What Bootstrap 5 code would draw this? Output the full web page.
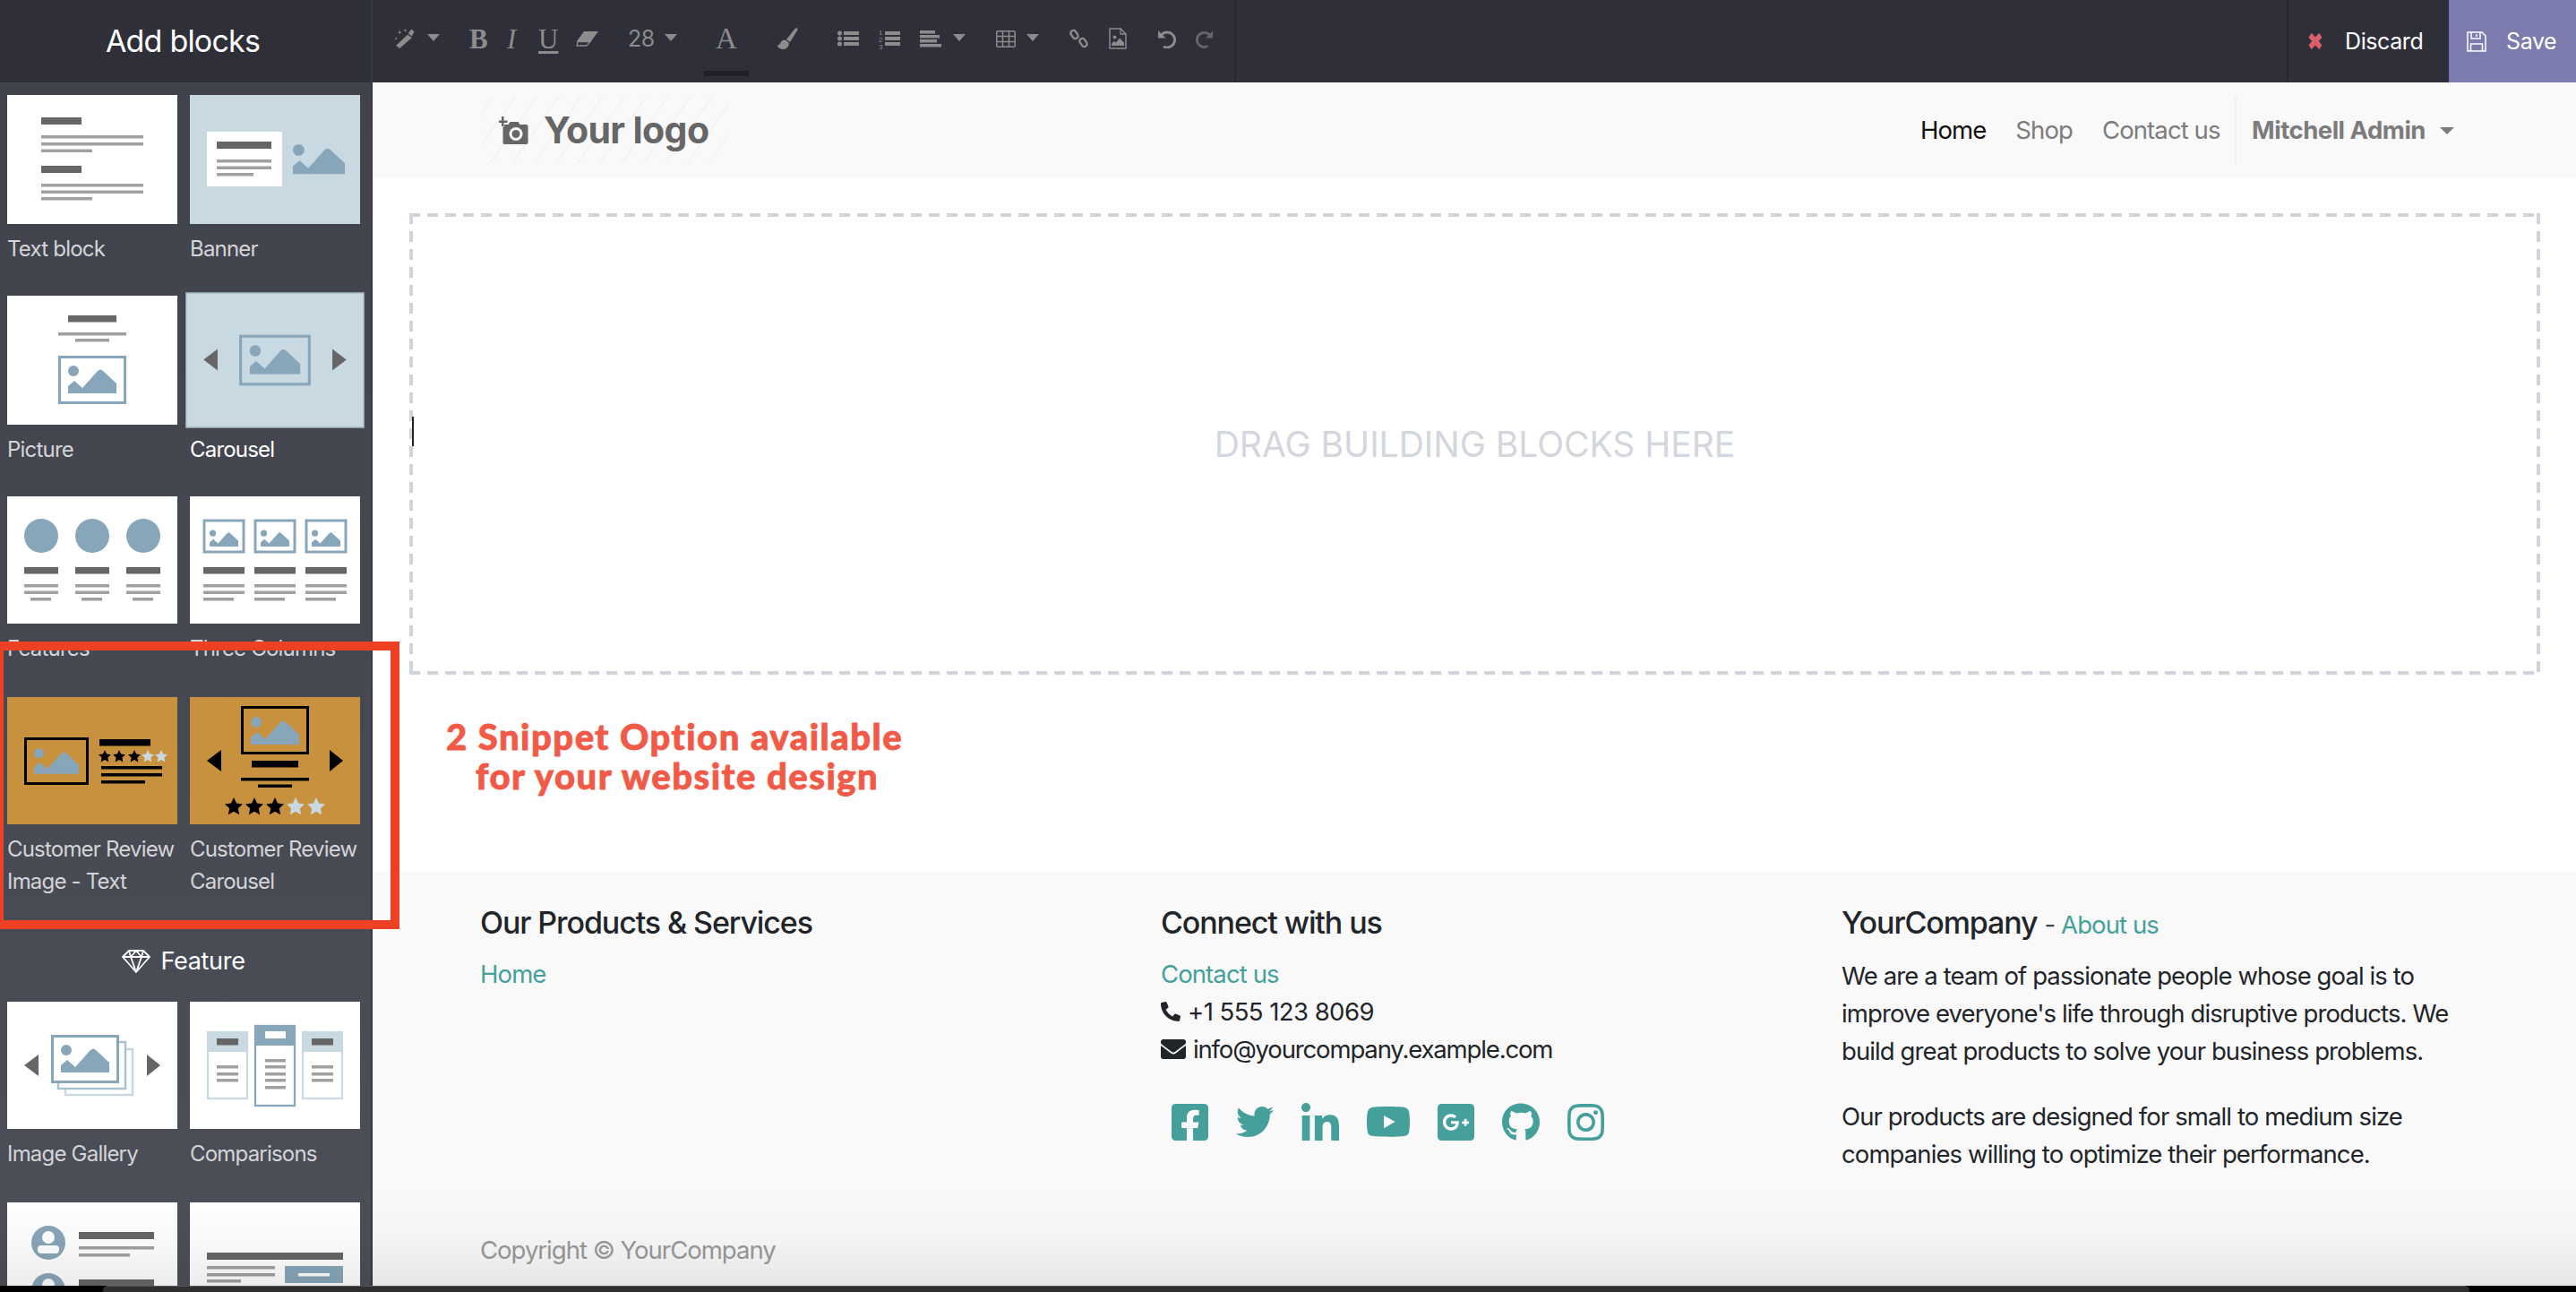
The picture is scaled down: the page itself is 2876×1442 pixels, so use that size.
<!DOCTYPE html>
<html lang="en">
<head>
<meta charset="utf-8">
<title>Add blocks</title>
<link href="https://cdn.jsdelivr.net/npm/bootstrap@5.3.0/dist/css/bootstrap.min.css" rel="stylesheet">
<style>
html,body{margin:0;height:100%;overflow:hidden}
body{font-family:Inter,"Liberation Sans",sans-serif;font-size:27.5px;line-height:42px;letter-spacing:-.9px;color:#212529;background:#fff}
.shell{height:1442px;width:2876px;overflow:hidden}
.rail{width:416px;flex:none;background:linear-gradient(180deg,#3f424b 0,#4c4f58 100%);border-right:2px solid #383a43;overflow:hidden}
.rail-head{height:92px;background:#2e2f38;color:#fff;font-size:34px;letter-spacing:-.8px;margin-right:-2px;border-right:2px solid #25262d;padding-right:6px}
.blocks{display:grid;grid-template-columns:190px 190px;column-gap:14px;padding:14px 0 0 8px}
.snip{height:224px;color:#d4d5d8;font-size:24px;line-height:35.5px;letter-spacing:-.8px}
.snip-tall{height:270px}
.snip-hot{color:#fff}
.thumb{display:block;width:190px;height:142px;margin-bottom:10px;background:#fff}
.thumb-lg{height:144px}
.thumb-blue{background:#c9d9e2}
.thumb-gold{background:#c8913e}
.thumb-hot{transform:scale(1.05);outline:1px solid #8e9fab;outline-offset:-1px}
.blocks-title{height:50px;grid-column:1 / 3;color:#fff;font-size:27px;letter-spacing:-.3px;margin-bottom:20px;gap:11px}
.stage{flex:1 1 auto;min-width:0}
.tools{height:92px;background:#2e2f38;color:#8c8c8c;flex:none}
.tool-set{width:964px;height:92px;border-right:2px solid #25262d;padding-left:25px;flex:none}
.tool-set > *{flex:none}
.ttxt{font-family:"Liberation Serif",serif;font-size:31px;line-height:1;letter-spacing:0;margin-top:-6px}
.t-bold{font-weight:700;width:20px;margin-left:33px}
.t-it{font-style:italic;width:12px;margin-left:22px}
.t-un{text-decoration:underline;text-underline-offset:3px;width:20px;margin-left:23px}
.t-num{font-size:25px;margin-left:33px;width:29px;letter-spacing:-.5px;margin-top:-6px}
.t-a{width:50px;margin-left:30px;height:60px;border-bottom:6px solid #1f2027;text-align:center;font-size:33px;line-height:36px;margin-top:18px}
.caret-t{width:14px;height:8px;background:#8c8c8c;clip-path:polygon(0 0,100% 0,50% 100%);margin-top:-8px}
.up{margin-top:-6px}
.m14{margin-left:14px}.m12{margin-left:12px}.m13{margin-left:13px}.m22{margin-left:22px}.m31{margin-left:31px}.m44{margin-left:44px}.m33{margin-left:33px}.m34{margin-left:34px}
.act{color:#fff;font-size:25px;letter-spacing:-.4px;height:92px}
.act-discard{width:181px;border-left:2px solid #25262d;padding-left:20px;gap:23px}
.act-save{width:142px;background:#7c7bad;padding-left:20px;gap:22px}
.topnav{height:106px;flex:none;background:#f9f9f9;padding:0 136px 0 121px}
.logo-zone{width:278px;height:74px;padding-left:20px;gap:16px;color:#666;font-weight:700;font-size:41px;letter-spacing:-.6px;background:repeating-linear-gradient(-55deg,#f9f9f9 0 18px,#f3f3f3 18px 20px)}
.topnav .nav-link{color:#7c7c7c;padding:0 16.5px;font-size:27.5px;line-height:42px}
.topnav .nav-link.now{color:#111}
.userbox{border-left:2px solid #eeeeee;height:74px;padding-left:17px}
.topnav .nav-link.who{padding:0;font-weight:700;color:#7c7c7c;letter-spacing:-.5px}
.topnav .nav-link.who::after{margin-left:16px;vertical-align:.2em}
.wrap-main{height:775px;padding:40px 40px 0 41px;flex:none;background:#fff}
.dropzone{height:515px;font-size:39px;letter-spacing:0;color:#d3d6dd;background-image:repeating-linear-gradient(90deg,#d0d4db 0 12px,transparent 12px 20px),repeating-linear-gradient(90deg,#d0d4db 0 12px,transparent 12px 20px),repeating-linear-gradient(180deg,#d0d4db 0 12px,transparent 12px 20px),repeating-linear-gradient(180deg,#d0d4db 0 12px,transparent 12px 20px);background-size:100% 4px,100% 4px,4px 100%,4px 100%;background-position:0 0,0 100%,0 0,100% 0;background-repeat:no-repeat}
.caret-mark{position:absolute;left:3px;top:227px;width:2px;height:33px;background:#222}
.note{font-family:Lato,"Liberation Sans",sans-serif;font-weight:900;color:#f15a47;font-size:40px;letter-spacing:1.5px;line-height:44px;padding:47px 0 0 41px;-webkit-text-stroke:.8px #f15a47}
.note-2{padding-left:33px}
.site-foot{flex:1 1 auto;background:#f9f9f9;padding:36px 0 0 120px}
.foot-grid{width:2280px}
.foot-h{font-size:34px;font-weight:500;line-height:42px;margin:0 0 15px;letter-spacing:-1.1px}
.tl{color:#45a09c;text-decoration:none}
.foot-sub{font-size:27.5px;font-weight:400;letter-spacing:-.9px;color:#444}
.foot-txt{width:700px;margin:0 0 31px}
.ico-r{color:#45a09c;margin-top:39px;padding-left:12px;gap:31px}
.tel{letter-spacing:-.55px}
.mail{letter-spacing:-1.15px}
.copy{color:#999;letter-spacing:-1px}
.foot-bottom{margin-top:34px}
.red-frame{position:absolute;left:-6px;top:716px;width:452px;height:321px;border:10px solid #ee4023;pointer-events:none}
.sheen{position:absolute;left:0;right:0;bottom:7px;height:110px;background:linear-gradient(180deg,rgba(0,0,0,0),rgba(0,0,0,.018) 50%,rgba(0,0,0,.075));pointer-events:none}
.edge-base{position:absolute;left:0;right:0;bottom:0;height:7px;background:#000}
.edge-bar{position:absolute;left:115px;width:2642px;bottom:0;height:7px;background:#2e2e2e;border-top:1px solid #555;border-radius:6px 6px 0 0}
</style>
</head>
<body>
<svg width="0" height="0" class="d-block">
  <defs>
    <symbol id="mt" viewBox="0 0 54 32"><circle cx="6" cy="7" r="6" fill="#88a6b9"/><path d="M0 32V24L7 18 16 26 33 7Q36 4 39 7L54 21V32Z" fill="#88a6b9"/></symbol>
    <symbol id="st" viewBox="0 0 24 24"><path d="M12 0l3.6 7.9 8.4 1-6.2 5.8 1.6 8.5L12 19l-7.4 4.2 1.6-8.5L0 8.900l8.400-1z"/></symbol>
  </defs>
</svg>
<div class="shell position-relative d-flex">
  <aside class="rail">
    <div class="rail-head d-flex align-items-center justify-content-center">Add blocks</div>
    <div class="blocks">
      <div class="snip">
        <svg class="thumb thumb-lg" viewBox="0 0 190 144"><g fill="#666"><rect x="38" y="25" width="45" height="8"/><rect x="38" y="79" width="45" height="8"/></g><g fill="#a0a0a0"><rect x="38" y="45" width="114" height="3.500"/><rect x="38" y="53" width="114" height="3.500"/><rect x="38" y="60.500" width="57" height="3.500"/><rect x="38" y="99" width="114" height="3.500"/><rect x="38" y="106.500" width="114" height="3.500"/><rect x="38" y="114" width="57" height="3.500"/></g></svg>
        Text block
      </div>
      <div class="snip">
        <svg class="thumb thumb-lg thumb-blue" viewBox="0 0 190 144"><rect x="19" y="41" width="84" height="61" fill="#fff"/><rect x="30" y="52" width="61" height="8" fill="#666"/><g fill="#a0a0a0"><rect x="30" y="72" width="61" height="3.500"/><rect x="30" y="79.500" width="61" height="3.500"/><rect x="30" y="87" width="41" height="3.500"/></g><use href="#mt" x="115" y="53" width="58" height="36"/></svg>
        Banner
      </div>
      <div class="snip">
        <svg class="thumb thumb-lg" viewBox="0 0 190 144"><rect x="68" y="22" width="54" height="7.500" fill="#666"/><rect x="57" y="41" width="76" height="3.500" fill="#a0a0a0"/><rect x="76" y="48" width="38" height="3.500" fill="#a0a0a0"/><rect x="58.500" y="68.500" width="73" height="51" fill="none" stroke="#88a6b9" stroke-width="3"/><use href="#mt" x="68" y="77" width="54" height="32"/></svg>
        Picture
      </div>
      <div class="snip snip-hot">
        <svg class="thumb thumb-lg thumb-blue thumb-hot" viewBox="0 0 190 144"><path d="M34 60V83L19 71.500Z" fill="#666"/><path d="M156 60V83L171 71.500Z" fill="#666"/><rect x="58.500" y="46.500" width="73" height="51" fill="none" stroke="#88a6b9" stroke-width="3"/><use href="#mt" x="68" y="55" width="54" height="32"/></svg>
        Carousel
      </div>
      <div class="snip">
        <svg class="thumb" viewBox="0 0 190 142"><g fill="#88a6b9"><circle cx="38" cy="44" r="19"/><circle cx="95" cy="44" r="19"/><circle cx="152" cy="44" r="19"/></g><g fill="#666"><rect x="19" y="79" width="38" height="7.500"/><rect x="76" y="79" width="38" height="7.500"/><rect x="133" y="79" width="38" height="7.500"/></g><g fill="#a0a0a0"><rect x="19" y="98" width="38" height="3.500"/><rect x="19" y="105.500" width="38" height="3.500"/><rect x="26" y="113" width="23" height="3.500"/><rect x="76" y="98" width="38" height="3.500"/><rect x="76" y="105.500" width="38" height="3.500"/><rect x="83" y="113" width="23" height="3.500"/><rect x="133" y="98" width="38" height="3.500"/><rect x="133" y="105.500" width="38" height="3.500"/><rect x="140" y="113" width="23" height="3.500"/></g></svg>
        Features
      </div>
      <div class="snip">
        <svg class="thumb" viewBox="0 0 190 142"><g fill="none" stroke="#88a6b9" stroke-width="3"><rect x="16" y="27" width="44" height="35"/><rect x="73" y="27" width="44" height="35"/><rect x="130" y="27" width="44" height="35"/></g><use href="#mt" x="22" y="37" width="32" height="19"/><use href="#mt" x="79" y="37" width="32" height="19"/><use href="#mt" x="136" y="37" width="32" height="19"/><g fill="#666"><rect x="15" y="79" width="46" height="7.500"/><rect x="72" y="79" width="46" height="7.500"/><rect x="129" y="79" width="46" height="7.500"/></g><g fill="#a0a0a0"><rect x="15" y="98" width="46" height="3.500"/><rect x="15" y="105.500" width="46" height="3.500"/><rect x="15" y="113" width="34" height="3.500"/><rect x="72" y="98" width="46" height="3.500"/><rect x="72" y="105.500" width="46" height="3.500"/><rect x="72" y="113" width="34" height="3.500"/><rect x="129" y="98" width="46" height="3.500"/><rect x="129" y="105.500" width="46" height="3.500"/><rect x="129" y="113" width="34" height="3.500"/></g></svg>
        Three Columns
      </div>
      <div class="snip snip-tall">
        <svg class="thumb thumb-gold" viewBox="0 0 190 142"><rect x="20.500" y="46.500" width="69" height="50" fill="none" stroke="#000" stroke-width="3"/><use href="#mt" x="30" y="56" width="50" height="30"/><rect x="103" y="47" width="57" height="7.500"/><use href="#st" x="102" y="59" width="14" height="14"/><use href="#st" x="118" y="59" width="14" height="14"/><use href="#st" x="135" y="59" width="14" height="14"/><use href="#st" x="150" y="59" width="14" height="14" fill="#c9d9e2"/><use href="#st" x="165" y="59" width="14" height="14" fill="#c9d9e2"/><rect x="105" y="77" width="68" height="3.500"/><rect x="105" y="85" width="68" height="3.500"/><rect x="105" y="93" width="49" height="3.500"/></svg>
        Customer Review<br>Image - Text
      </div>
      <div class="snip snip-tall">
        <svg class="thumb thumb-gold" viewBox="0 0 190 142"><rect x="58.500" y="11.500" width="73" height="51" fill="none" stroke="#000" stroke-width="3"/><use href="#mt" x="68" y="21" width="54" height="32"/><path d="M35 59V83L19 71Z"/><path d="M156 59V83L171 71Z"/><rect x="69" y="71" width="52" height="7.500"/><rect x="57" y="90" width="76" height="3.500"/><rect x="76" y="97.500" width="38" height="3.500"/><use href="#st" x="39" y="112" width="20" height="20"/><use href="#st" x="62" y="112" width="20" height="20"/><use href="#st" x="85" y="112" width="20" height="20"/><use href="#st" x="108" y="112" width="20" height="20" fill="#c9d9e2"/><use href="#st" x="131" y="112" width="20" height="20" fill="#c9d9e2"/></svg>
        Customer Review<br>Carousel
      </div>
      <div class="blocks-title d-flex align-items-center justify-content-center">
        <svg width="32" height="26" viewBox="0 0 32 26" fill="none" stroke="#fff" stroke-width="1.800" stroke-linejoin="round"><path d="M8 1H24L31 8 16 25 1 8ZM1 8H31M10 8 16 25 22 8M8 1 10 8 16 1 22 8 24 1"/></svg>
        Feature
      </div>
      <div class="snip">
        <svg class="thumb" viewBox="0 0 190 142"><path d="M35 59V83L19 71Z" fill="#666"/><path d="M156 59V83L171 71Z" fill="#666"/><rect x="65" y="53" width="75" height="51" fill="#fff" stroke="#c9d9e2" stroke-width="2.500"/><rect x="57" y="45" width="75" height="52" fill="#fff" stroke="#a9c2d0" stroke-width="2.500"/><rect x="50.500" y="38.500" width="73" height="51" fill="#fff" stroke="#88a6b9" stroke-width="3"/><use href="#mt" x="60" y="47" width="54" height="32"/></svg>
        Image Gallery
      </div>
      <div class="snip">
        <svg class="thumb" viewBox="0 0 190 142"><rect x="20" y="34" width="44" height="74" fill="#fff" stroke="#c9d9e2" stroke-width="2.300"/><rect x="19" y="33" width="46" height="23" fill="#c9d9e2"/><rect x="126" y="34" width="44" height="74" fill="#fff" stroke="#c9d9e2" stroke-width="2.300"/><rect x="125" y="33" width="46" height="23" fill="#c9d9e2"/><rect x="73" y="27" width="44" height="89" fill="#fff" stroke="#88a6b9" stroke-width="2.300"/><rect x="72" y="26" width="46" height="23" fill="#88a6b9"/><rect x="84" y="33" width="23" height="8" fill="#fff"/><g fill="#666"><rect x="30" y="41" width="24" height="7.500"/><rect x="136" y="41" width="24" height="7.500"/></g><g fill="#a0a0a0"><rect x="30" y="71" width="24" height="3.500"/><rect x="30" y="79" width="24" height="3.500"/><rect x="30" y="86" width="24" height="3.500"/><rect x="136" y="71" width="24" height="3.500"/><rect x="136" y="79" width="24" height="3.500"/><rect x="136" y="86" width="24" height="3.500"/><rect x="84" y="64" width="23" height="3.500"/><rect x="84" y="71" width="23" height="3.500"/><rect x="84" y="79" width="23" height="3.500"/><rect x="84" y="86" width="23" height="3.500"/><rect x="84" y="94" width="23" height="3.500"/></g></svg>
        Comparisons
      </div>
      <div class="snip">
        <svg class="thumb" viewBox="0 0 190 142"><circle cx="46" cy="45" r="19" fill="#88a6b9"/><circle cx="46" cy="39" r="7" fill="#fff"/><rect x="34" y="48" width="24" height="9" rx="4" fill="#fff"/><circle cx="46" cy="98" r="19" fill="#88a6b9"/><circle cx="46" cy="92" r="7" fill="#fff"/><rect x="80" y="33" width="84" height="8" fill="#666"/><rect x="80" y="86" width="84" height="8" fill="#666"/><g fill="#a0a0a0"><rect x="80" y="49" width="84" height="3.500"/><rect x="80" y="57" width="57" height="3.500"/></g></svg>
      </div>
      <div class="snip">
        <svg class="thumb" viewBox="0 0 190 142"><rect x="19" y="56" width="152" height="8" fill="#666"/><g fill="#a0a0a0"><rect x="19" y="71" width="76" height="3.500"/><rect x="19" y="79" width="76" height="3.500"/><rect x="19" y="86" width="38" height="3.500"/></g><rect x="106" y="71" width="65" height="19" fill="#88a6b9"/><rect x="121" y="79" width="35" height="3.500" fill="#fff"/></svg>
      </div>
    </div>
  </aside>

  <main class="stage d-flex flex-column">
    <div class="tools d-flex">
      <div class="tool-set d-flex align-items-center">
        <svg class="up" width="22" height="22" viewBox="0 0 21 21" fill="currentColor"><path d="M13.500 6.500l4.500 3L5 21 1 18z"/><path d="M17.500 0.500l3 2.500-2.500 5-4-3z"/><path d="M5 2l.6 1.400L7 4l-1.400.6L5 6l-.6-1.400L3 4l1.400-.6zM11 0l.5 1.500L13 2l-1.500.5L11 4l-.5-1.500L9 2l1.500-.5zM1 9l.5 1 1 .5-1 .5-.5 1-.5-1-1-.5 1-.5z"/></svg>
        <span class="caret-t m14"></span>
        <span class="ttxt t-bold">B</span>
        <span class="ttxt t-it">I</span>
        <span class="ttxt t-un">U</span>
        <svg class="m22 up" width="25" height="17" viewBox="0 0 25 17" fill="currentColor"><path d="M9 0h16l-8 11H1z"/><path d="M2 11.500h14L12 16H1L2 11.500z" fill="none" stroke="currentColor" stroke-width="1.300"/></svg>
        <span class="t-num">28</span>
        <span class="caret-t m12"></span>
        <span class="ttxt t-a">A</span>
        <svg class="m31 up" width="24" height="24" viewBox="0 0 24 24" fill="currentColor"><path d="M21 0.500c1.500-.5 3 .5 2.500 2L15 16l-4-3z"/><path d="M10 13.500l4 3.500c-.3 4-3 7-6.500 7C3.500 24 1 21.500 1 19.500c1.500.2 2.500-.8 3.500-3 1-2 3-3 5.500-3z"/></svg>
        <svg class="m44 up" width="24" height="18" viewBox="0 0 24 18" fill="currentColor"><circle cx="2.500" cy="3" r="2.500"/><circle cx="2.500" cy="9" r="2.500"/><circle cx="2.500" cy="15" r="2.500"/><rect x="7" y="1" width="17" height="4"/><rect x="7" y="7" width="17" height="4"/><rect x="7" y="13" width="17" height="4"/></svg>
        <svg class="m22 up" width="24" height="24" viewBox="0 0 24 24" fill="currentColor"><text x="0" y="7.500" font-size="8" font-family="Liberation Sans,sans-serif" letter-spacing="0">1</text><text x="0" y="15.500" font-size="8" font-family="Liberation Sans,sans-serif" letter-spacing="0">2</text><text x="0" y="23.500" font-size="8" font-family="Liberation Sans,sans-serif" letter-spacing="0">3</text><rect x="7" y="4" width="17" height="4"/><rect x="7" y="10" width="17" height="4"/><rect x="7" y="16" width="17" height="4"/></svg>
        <svg class="m22 up" width="24" height="19" viewBox="0 0 24 19" fill="currentColor"><rect x="0" y="0" width="17" height="3.500"/><rect x="0" y="5" width="22" height="3.500"/><rect x="0" y="10" width="19" height="3.500"/><rect x="0" y="15" width="24" height="3.500"/></svg>
        <span class="caret-t m13"></span>
        <svg class="m34 up" width="22" height="19" viewBox="0 0 22 19" fill="none" stroke="currentColor" stroke-width="1.500"><rect x=".8" y=".8" width="20.400" height="17.400" rx="1"/><path d="M1 6.500h20M1 12.500h20M7.500 1v17M14.500 1v17"/></svg>
        <span class="caret-t m12"></span>
        <svg class="m33 up" width="23" height="22" viewBox="0 0 23 22" fill="none" stroke="currentColor" stroke-width="2.400"><rect x="-5" y="-3" width="10" height="6" rx="3" transform="translate(6.500 6.500) rotate(55)" /><rect x="-5" y="-3" width="10" height="6" rx="3" transform="translate(16.500 15.500) rotate(55)"/></svg>
        <svg class="m22 up" width="20" height="24" viewBox="0 0 20 24" fill="currentColor"><path d="M1 1h12l6 6v16H1z" fill="none" stroke="currentColor" stroke-width="1.500"/><path d="M13 1v6h6" fill="none" stroke="currentColor" stroke-width="1.300"/><circle cx="6.500" cy="10.500" r="2"/><path d="M3 20v-2.500l3-2.500 2 1.500 4-5 5 5v3.500z"/></svg>
        <svg class="m34 up" width="21" height="21" viewBox="0 0 21 21" fill="none" stroke="currentColor" stroke-width="3"><path d="M5 5.500A8.500 8.500 0 1 1 7 19"/><path d="M1 1v8.500h8.500z" fill="currentColor" stroke="none"/></svg>
        <svg class="m22 up" width="20" height="21" viewBox="0 0 21 21" fill="none" stroke="#666" stroke-width="3"><path d="M16 5.500A8.500 8.500 0 1 0 14 19"/><path d="M20 1v8.500h-8.500z" fill="#666" stroke="none"/></svg>
      </div>
      <div class="flex-grow-1"></div>
      <a class="act act-discard d-flex align-items-center text-decoration-none">
        <svg width="20" height="20" viewBox="0 0 19 19"><path d="M3 5.500L5.500 1.500 9.500 6 13.500 1.500 16 5.500 12.500 9.500 16 13.500 13.500 17.500 9.500 13 5.500 17.500 3 13.500 6.500 9.500z" fill="#d9606b" stroke="#d9606b"/></svg>
        Discard
      </a>
      <a class="act act-save d-flex align-items-center text-decoration-none">
        <svg width="22" height="23" viewBox="0 0 22 23" fill="none" stroke="#fff" stroke-width="1.500"><path d="M1 1h16l4 4v17H1z"/><path d="M5 1v7h10V1M11 3v3M4.500 22v-8h13v8" /></svg>
        Save
      </a>
    </div>

    <nav class="navbar topnav flex-nowrap align-items-center">
      <a class="logo-zone d-flex align-items-center text-decoration-none">
        <svg width="34" height="31" viewBox="0 0 34 31" fill="#666"><path d="M4.500 9h6l2-3h9l2 3h7a2 2 0 0 1 2 2v18a2 2 0 0 1-2 2h-24a2 2 0 0 1-2-2z"/><circle cx="19" cy="19.500" r="7.500" fill="#f9f9f9"/><circle cx="19" cy="19.500" r="4.500"/><rect x="3" y="0" width="2.500" height="11" fill="#f9f9f9" stroke="#f9f9f9"/><rect x="3" y="0" width="2.500" height="11"/><rect x="-1" y="4.500" width="10.500" height="2.500"/></svg>
        Your logo
      </a>
      <ul class="navbar-nav flex-row align-items-center">
        <li class="nav-item"><a class="nav-link now">Home</a></li>
        <li class="nav-item"><a class="nav-link">Shop</a></li>
        <li class="nav-item"><a class="nav-link">Contact us</a></li>
        <li class="nav-item userbox d-flex align-items-center"><a class="nav-link who dropdown-toggle">Mitchell Admin</a></li>
      </ul>
    </nav>

    <section class="wrap-main">
      <div class="dropzone position-relative d-flex align-items-center justify-content-center">
        <span class="caret-mark"></span>
        DRAG BUILDING BLOCKS HERE
      </div>
      <div class="note">
        <div>2 Snippet Option available</div>
        <div class="note-2">for your website design</div>
      </div>
    </section>

    <footer class="site-foot">
      <div class="row g-0 foot-grid">
        <div class="col-4">
          <h5 class="foot-h">Our Products &amp; Services</h5>
          <a class="tl">Home</a>
        </div>
        <div class="col-4">
          <h5 class="foot-h">Connect with us</h5>
          <div><a class="tl">Contact us</a></div>
          <div class="tel d-flex align-items-center gap-2">
            <svg width="22" height="22" viewBox="0 0 512 512" fill="#212529"><path transform="matrix(-1 0 0 1 512 0)" d="M493.400 24.600l-104-24c-11.300-2.600-22.900 3.300-27.500 13.900l-48 112c-4.200 9.800-1.400 21.300 6.900 28l60.600 49.600c-36 76.700-98.900 140.500-177.200 177.200l-49.600-60.600c-6.800-8.300-18.200-11.100-28-6.900l-112 48C3.900 366.500-2 378.100.6 389.400l24 104C27.100 504.200 36.700 512 48 512c256.100 0 464-207.500 464-464 0-11.200-7.700-20.900-18.600-23.400z"/></svg>
            +1 555 123 8069
          </div>
          <div class="mail d-flex align-items-center gap-2">
            <svg width="28" height="22" viewBox="0 64 512 384" preserveAspectRatio="none" fill="#212529"><path d="M502.300 190.800c3.900-3.100 9.700-.2 9.700 4.700V400c0 26.500-21.500 48-48 48H48c-26.500 0-48-21.500-48-48V195.600c0-5 5.700-7.800 9.700-4.700 22.400 17.400 52.100 39.500 154.100 113.600 21.100 15.400 56.700 47.800 92.200 47.600 35.700.3 72-32.800 92.300-47.600 102-74.100 131.600-96.300 154-113.700zM256 320c23.200.4 56.600-29.200 73.400-41.400 132.700-96.300 142.800-104.700 173.400-128.700 5.800-4.500 9.200-11.500 9.200-18.900v-19c0-26.500-21.500-48-48-48H48C21.500 64 0 85.500 0 112v19c0 7.400 3.400 14.300 9.200 18.900 30.600 23.900 40.700 32.400 173.400 128.700 16.800 12.200 50.200 41.800 73.400 41.400z"/></svg>
            info@yourcompany.example.com
          </div>
          <div class="ico-r d-flex align-items-center">
            <svg width="41" height="41" viewBox="0 32 448 448" fill="currentColor"><path d="M400 32H48A48 48 0 0 0 0 80v352a48 48 0 0 0 48 48h137.250V327.690h-63V256h63v-54.640c0-62.150 37-96.480 93.670-96.480 27.140 0 55.520 4.840 55.520 4.840v61h-31.270c-30.810 0-40.420 19.120-40.420 38.730V256h68.780l-11 71.690h-57.780V480H400a48 48 0 0 0 48-48V80a48 48 0 0 0-48-48z"/></svg>
            <svg width="42" height="42" viewBox="0 0 512 512" fill="currentColor"><path d="M459.370 151.716c.325 4.548.325 9.097.325 13.645 0 138.720-105.583 298.558-298.558 298.558-59.452 0-114.680-17.219-161.137-47.106 8.447.974 16.568 1.299 25.340 1.299 49.055 0 94.213-16.568 130.274-44.832-46.132-.975-84.792-31.188-98.112-72.772 6.498.974 12.995 1.624 19.818 1.624 9.421 0 18.843-1.300 27.614-3.573-48.081-9.747-84.143-51.980-84.143-102.985v-1.299c13.969 7.797 30.214 12.670 47.431 13.319-28.264-18.843-46.781-51.005-46.781-87.391 0-19.492 5.197-37.360 14.294-52.954 51.655 63.675 129.300 105.258 216.365 109.807-1.624-7.797-2.599-15.918-2.599-24.040 0-57.828 46.782-104.934 104.934-104.934 30.213 0 57.502 12.670 76.670 33.137 23.715-4.548 46.456-13.320 66.599-25.340-7.798 24.366-24.366 44.833-46.132 57.827 21.117-2.273 41.584-8.122 60.426-16.243-14.292 20.791-32.161 39.308-52.628 54.253z"/></svg>
            <svg width="42" height="42" viewBox="0 0 448 448" fill="currentColor"><path d="M100.280 448H7.400V148.900h92.880zM53.790 108.100C24.090 108.100 0 83.500 0 53.800a53.790 53.790 0 0 1 107.580 0c0 29.700-24.100 54.300-53.790 54.300zM447.900 448h-92.680V302.400c0-34.700-.7-79.200-48.290-79.200-48.290 0-55.690 37.700-55.690 76.700V448h-92.780V148.900h89.080v40.800h1.300c12.400-23.500 42.690-48.300 87.880-48.300 94 0 111.280 61.900 111.280 142.300V448z"/></svg>
            <svg width="48" height="42" viewBox="15 40 546 432" fill="currentColor"><path d="M549.655 124.083c-6.281-23.650-24.787-42.276-48.284-48.597C458.781 64 288 64 288 64S117.220 64 74.629 75.486c-23.497 6.322-42.003 24.947-48.284 48.597-11.412 42.867-11.412 132.305-11.412 132.305s0 89.438 11.412 132.305c6.281 23.650 24.787 41.500 48.284 47.821C117.220 448 288 448 288 448s170.780 0 213.371-11.486c23.497-6.321 42.003-24.171 48.284-47.821 11.412-42.867 11.412-132.305 11.412-132.305s0-89.438-11.412-132.305zm-317.510 213.508V175.185l142.739 81.205-142.739 81.201z"/></svg>
            <svg width="41" height="41" viewBox="0 32 448 448" fill="currentColor"><path d="M400 32H48C21.500 32 0 53.500 0 80v352c0 26.500 21.500 48 48 48h352c26.500 0 48-21.500 48-48V80c0-26.500-21.500-48-48-48zM164 356c-55.300 0-100-44.700-100-100s44.700-100 100-100c27 0 49.500 9.800 67 26.200l-27.100 26.100c-7.400-7.100-20.300-15.400-39.800-15.400-34.100 0-61.900 28.200-61.900 63.200 0 34.900 27.800 63.200 61.900 63.200 39.600 0 54.400-28.500 56.800-43.100H164v-34.400h94.400c1 5 1.600 10.100 1.600 16.600 0 57.100-38.300 97.600-96 97.600zm220-81.800h-29v29h-29.200v-29h-29V245h29v-29H355v29h29v29.200z"/></svg>
            <svg width="42" height="42" viewBox="0 8 496 484" fill="currentColor"><path d="M244.800 8C106.100 8 0 113.300 0 252c0 110.900 69.800 205.800 169.500 239.200 12.800 2.300 17.300-5.600 17.300-12.100 0-6.200-.3-40.400-.3-61.400 0 0-70 15-84.700-29.800 0 0-11.400-29.100-27.800-36.600 0 0-22.900-15.700 1.600-15.400 0 0 24.900 2 38.600 25.800 21.900 38.600 58.600 27.500 72.900 20.900 2.300-16 8.800-27.100 16-33.700-55.900-6.200-112.300-14.300-112.300-110.500 0-27.500 7.600-41.300 23.600-58.900-2.600-6.500-11.100-33.300 2.600-67.900 20.900-6.500 69 27 69 27 20-5.600 41.500-8.500 62.800-8.500s42.800 2.900 62.800 8.500c0 0 48.100-33.600 69-27 13.700 34.700 5.200 61.400 2.600 67.900 16 17.700 25.800 31.500 25.800 58.900 0 96.500-58.900 104.200-114.800 110.500 9.200 7.900 17 22.900 17 46.400 0 33.700-.3 75.400-.3 83.600 0 6.500 4.600 14.400 17.300 12.100C428.200 457.800 496 362.900 496 252 496 113.300 383.500 8 244.800 8z"/></svg>
            <svg width="41" height="41" viewBox="0 31 448 448" fill="currentColor"><path d="M224.100 141c-63.600 0-114.900 51.300-114.900 114.900s51.300 114.900 114.900 114.900S339 319.500 339 255.900 287.700 141 224.100 141zm0 189.600c-41.100 0-74.700-33.500-74.700-74.700s33.500-74.700 74.700-74.700 74.700 33.500 74.700 74.700-33.600 74.700-74.700 74.700zm146.400-194.300c0 14.900-12 26.800-26.800 26.800-14.900 0-26.800-12-26.800-26.800s12-26.800 26.800-26.800 26.800 12 26.800 26.800zm76.100 27.200c-1.700-35.900-9.900-67.700-36.200-93.900-26.200-26.200-58-34.400-93.900-36.200-37-2.100-147.900-2.100-184.900 0-35.800 1.700-67.600 9.900-93.900 36.100s-34.400 58-36.200 93.900c-2.100 37-2.100 147.900 0 184.900 1.700 35.900 9.900 67.700 36.200 93.900s58 34.400 93.900 36.200c37 2.100 147.900 2.100 184.900 0 35.900-1.700 67.700-9.900 93.900-36.200 26.200-26.200 34.400-58 36.200-93.900 2.100-37 2.100-147.800 0-184.800zM398.800 388c-7.800 19.600-22.900 34.700-42.600 42.600-29.500 11.700-99.500 9-132.100 9s-102.700 2.600-132.100-9c-19.600-7.800-34.700-22.900-42.600-42.600-11.700-29.500-9-99.500-9-132.100s-2.600-102.700 9-132.100c7.800-19.600 22.900-34.700 42.600-42.600 29.500-11.700 99.500-9 132.100-9s102.700-2.600 132.100 9c19.600 7.800 34.700 22.900 42.600 42.600 11.700 29.500 9 99.500 9 132.100s2.700 102.700-9 132.100z"/></svg>
          </div>
        </div>
        <div class="col-4">
          <h5 class="foot-h">YourCompany <span class="foot-sub">- <a class="tl">About us</a></span></h5>
          <p class="foot-txt">We are a team of passionate people whose goal is to improve everyone's life through disruptive products. We build great products to solve your business problems.</p>
          <p class="foot-txt">Our products are designed for small to medium size companies willing to optimize their performance.</p>
        </div>
      </div>
      <div class="copy foot-bottom">Copyright © YourCompany</div>
    </footer>
  </main>

  <div class="red-frame"></div>
  <div class="sheen"></div>
  <div class="edge-base"><div class="edge-bar"></div></div>
</div>
<script src="https://cdn.jsdelivr.net/npm/bootstrap@5.3.0/dist/js/bootstrap.bundle.min.js"></script>
</body>
</html>
